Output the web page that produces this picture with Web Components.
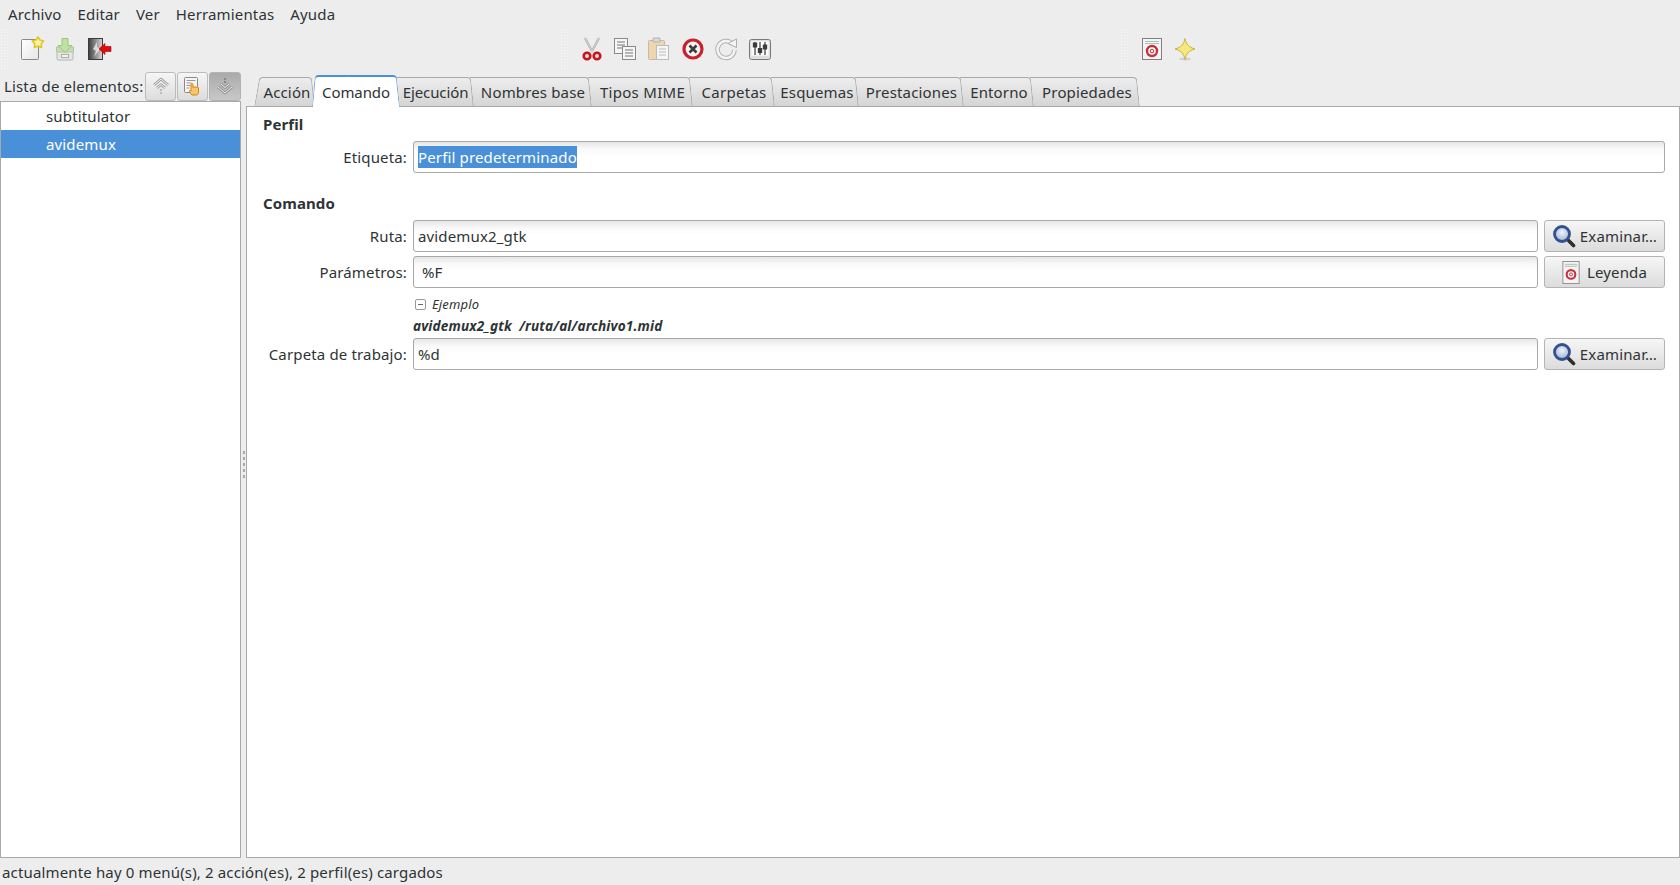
<!DOCTYPE html>
<html lang="es">
<head>
<meta charset="utf-8">
<title>Nautilus Actions</title>
<style>
  html, body { margin: 0; height: 100%; overflow: hidden; }
  body { background: #ededed; color: #2e3436; font: 15px "Noto Sans", sans-serif; letter-spacing: .15px; }
</style>
</head>
<body>
<app-window>
  <menu-bar>
    <span>Archivo</span><span>Editar</span><span>Ver</span><span>Herramientas</span><span>Ayuda</span>
  </menu-bar>
  <tool-bar>
    <tool-group>
      <tool-icon name="new"></tool-icon><tool-icon name="save"></tool-icon><tool-icon name="quit"></tool-icon>
    </tool-group>
    <tool-group>
      <tool-icon name="cut"></tool-icon><tool-icon name="copy"></tool-icon><tool-icon name="paste"></tool-icon>
      <tool-icon name="stop"></tool-icon><tool-icon name="reload"></tool-icon><tool-icon name="prefs"></tool-icon>
    </tool-group>
    <tool-group>
      <tool-icon name="help"></tool-icon><tool-icon name="about"></tool-icon>
    </tool-group>
  </tool-bar>
  <main-pane>
    <item-list slot="side">
      <span slot="title">Lista de elementos:</span>
      <list-row>subtitulator</list-row>
      <list-row selected>avidemux</list-row>
    </item-list>
    <tab-book>
      <tab-label slot="tabs" first style="width:61px">Acción</tab-label>
      <tab-label slot="tabs" active style="width:82px;letter-spacing:-.1px">Comando</tab-label>
      <tab-label slot="tabs" style="width:77px;letter-spacing:-.1px">Ejecución</tab-label>
      <tab-label slot="tabs" style="width:118px">Nombres base</tab-label>
      <tab-label slot="tabs" style="width:101px;letter-spacing:.3px">Tipos MIME</tab-label>
      <tab-label slot="tabs" style="width:82px;letter-spacing:.3px">Carpetas</tab-label>
      <tab-label slot="tabs" style="width:84px">Esquemas</tab-label>
      <tab-label slot="tabs" style="width:105px">Prestaciones</tab-label>
      <tab-label slot="tabs" style="width:70px">Entorno</tab-label>
      <tab-label slot="tabs" style="width:106px">Propiedades</tab-label>

      <command-page></command-page>
    </tab-book>
  </main-pane>
  <status-bar>actualmente hay 0 menú(s), 2 acción(es), 2 perfil(es) cargados</status-bar>
</app-window>

<script>
const ICONS = {
  new: `<svg viewBox="0 0 26 26" width="26" height="26">
    <defs><linearGradient id="p" x1="0" y1="0" x2="1" y2="1"><stop offset="0" stop-color="#fff"/><stop offset="1" stop-color="#e6e6e6"/></linearGradient></defs>
    <rect x="2.5" y="3.500" width="17" height="20" fill="url(#p)" stroke="#8a8a8a" rx="1"/>
    <path d="M19 .8l2 3.300 3.700.8-2.500 2.800.4 3.800-3.600-1.500-3.600 1.500.4-3.800-2.500-2.800 3.700-.8z" fill="#fdf3a8" stroke="#dcc81e" stroke-width="1.500" stroke-linejoin="round"/>
  </svg>`,
  save: `<svg viewBox="0 0 26 26" width="26" height="26">
    <path d="M5 15h16v8a1 1 0 0 1-1 1H6a1 1 0 0 1-1-1z" fill="#e4e6e2" stroke="#b8bab6"/>
    <path d="M4.500 11h17v5h-17z" fill="#c9dcb8" stroke="#b4c6a6"/>
    <path d="M10 2.500h6v7h4l-7 7-7-7h4z" fill="#c0e0a4" stroke="#9cc67c"/>
    <rect x="9.500" y="18.500" width="7" height="3" fill="#f4f4f4" stroke="#adadad"/>
  </svg>`,
  quit: `<svg viewBox="0 0 26 26" width="26" height="26">
    <defs><linearGradient id="d" x1="0" x2="1"><stop offset="0" stop-color="#3f3f3f"/><stop offset="1" stop-color="#d8d8d8"/></linearGradient></defs>
    <rect x="2.500" y="2.500" width="14" height="21" fill="url(#d)" stroke="#3a3a3a"/>
    <path d="M11 6l-4 7 3 2-2 6 6-8-3-2z" fill="#f0f0f0" opacity=".75"/>
    <path d="M13 13l6-5.500v3h6v5h-6v3z" fill="#e00d0d" stroke="#a50000" stroke-width=".6"/>
  </svg>`,
  cut: `<svg viewBox="0 0 26 26" width="26" height="26">
    <path d="M6 2l7.500 14M20 2l-7.500 14" stroke="#a8a8a8" stroke-width="2.200" fill="none"/>
    <path d="M6 2l7.500 14M20 2l-7.500 14" stroke="#ededed" stroke-width=".7" fill="none"/>
    <circle cx="8" cy="20" r="3.300" fill="#f2d8d8" stroke="#c4161c" stroke-width="2.600"/>
    <circle cx="18" cy="20" r="3.300" fill="#f2d8d8" stroke="#c4161c" stroke-width="2.600"/>
  </svg>`,
  copy: `<svg viewBox="0 0 26 26" width="26" height="26">
    <rect x="2.500" y="2.500" width="13" height="15" fill="#f6f6f6" stroke="#8a8a8a"/>
    <path d="M5 6h8M5 9h8M5 12h8" stroke="#777" fill="none"/>
    <rect x="10.500" y="10.500" width="13" height="13" fill="#f6f6f6" stroke="#8a8a8a"/>
    <path d="M13 14h8M13 17h8M13 20h8" stroke="#777" fill="none"/>
  </svg>`,
  paste: `<svg viewBox="0 0 26 26" width="26" height="26">
    <rect x="2.500" y="4.500" width="16" height="19" rx="1" fill="#edd7b2" stroke="#cdb998"/>
    <rect x="7" y="2" width="7" height="4" rx="1" fill="#dadada" stroke="#b0b0b0"/>
    <rect x="10.500" y="9.500" width="12" height="14" fill="#f6f6f6" stroke="#bbb"/>
    <path d="M13 13h7M13 16h7M13 19h7" stroke="#bbb" fill="none"/>
  </svg>`,
  stop: `<svg viewBox="0 0 26 26" width="26" height="26">
    <circle cx="13" cy="13" r="9" fill="#f4f4f4" stroke="#c9202a" stroke-width="3.200"/>
    <path d="M9.500 9.500l7 7M16.500 9.500l-7 7" stroke="#3c3c3c" stroke-width="2.600"/>
  </svg>`,
  reload: `<svg viewBox="0 0 26 26" width="26" height="26">
    <path d="M19.500 8A8.500 8.500 0 1 0 21.500 14" fill="none" stroke="#adadad" stroke-width="4.400"/>
    <path d="M19.500 8A8.500 8.500 0 1 0 21.500 14" fill="none" stroke="#f4f4f4" stroke-width="2.600"/>
    <path d="M15 7.500L23.500 3V11.500z" fill="#f4f4f4" stroke="#adadad"/>
  </svg>`,
  prefs: `<svg viewBox="0 0 26 26" width="26" height="26">
    <rect x="2.500" y="3.500" width="21" height="20" rx="2" fill="#dedede" stroke="#7a7a7a"/>
    <rect x="4.500" y="5.500" width="17" height="14" fill="#fff"/>
    <path d="M8 6v13M13 6v13M18 6v13" stroke="#555" stroke-width="1.400"/>
    <rect x="5.800" y="6.500" width="4.400" height="5" fill="#3c3c3c"/>
    <rect x="10.800" y="12" width="4.400" height="5" fill="#3c3c3c"/>
    <rect x="15.800" y="8.500" width="4.400" height="5" fill="#3c3c3c"/>
  </svg>`,
  help: `<svg viewBox="0 0 26 26" width="26" height="26">
    <rect x="3.500" y="2.500" width="19" height="21" fill="#f4f4f4" stroke="#808080"/>
    <path d="M6 5.500h14M6 7.500h14" stroke="#a9c4ae" fill="none"/>
    <circle cx="13" cy="15" r="5" fill="#fff" stroke="#c9303a" stroke-width="2.400"/>
    <circle cx="13" cy="15" r="1.800" fill="#f4f4f4" stroke="#c9303a"/>
  </svg>`,
  about: `<svg viewBox="0 0 26 26" width="26" height="26">
    <ellipse cx="13" cy="23" rx="6" ry="1.500" fill="#000" opacity=".12"/>
    <path d="M13 2.500c1.300 6 3.500 8.600 10 10.500-6.500 1.900-8.700 4.500-10 10.500-1.300-6-3.500-8.600-10-10.500 6.500-1.900 8.700-4.500 10-10.500z" fill="#f6e77e" stroke="#c9b53a"/>
  </svg>`,
  up: `<svg viewBox="0 0 18 18" width="18" height="18" fill="none" stroke-linejoin="round">
    <path d="M2 8l7-6 7 6M5 11l4-3.500 4 3.500" stroke="#9e9e9e" stroke-width="2.600"/>
    <path d="M2 8l7-6 7 6M5 11l4-3.500 4 3.500" stroke="#f4f4f4" stroke-width="1"/>
    <circle cx="9" cy="13" r="1" fill="#aaa"/><circle cx="9" cy="16" r=".9" fill="#aaa"/>
  </svg>`,
  down: `<svg viewBox="0 0 18 18" width="18" height="18" fill="none" stroke-linejoin="round">
    <circle cx="9" cy="2" r=".9" fill="#777"/><circle cx="9" cy="5" r="1" fill="#777"/>
    <path d="M2 10l7 6 7-6M5 7l4 3.500 4-3.500" stroke="#8e8e8e" stroke-width="2.600"/>
    <path d="M2 10l7 6 7-6M5 7l4 3.500 4-3.500" stroke="#f6f6f6" stroke-width="1"/>
  </svg>`,
  pick: `<svg viewBox="0 0 20 20" width="20" height="20">
    <rect x="1.500" y="1.500" width="13" height="15" rx="1" fill="#f5f5f5" stroke="#888"/>
    <path d="M3.500 4.500h9M3.500 7h5M3.500 9.500h4M3.500 12h3" stroke="#999" fill="none"/>
    <path d="M9 19c-1.500-1.500-2.500-3-2.500-4s1-1 1.500 0V8.500c0-1.300 2-1.300 2 0v3c0-1 1.800-1 1.800 0 0-1 1.800-1 1.800 0 0-.8 1.900-.8 1.900.3V16c0 1.500-.8 2.500-1.700 3z" fill="#f7c66a" stroke="#d8860f"/>
  </svg>`,
  find: `<svg viewBox="0 0 24 24" width="24" height="24">
    <defs><radialGradient id="g" cx=".5" cy=".4"><stop offset="0" stop-color="#f0f4fa"/><stop offset="1" stop-color="#a6bcdb"/></radialGradient></defs>
    <path d="M15 15l6.500 6.500" stroke="#2e2e2e" stroke-width="3.600" stroke-linecap="round"/>
    <circle cx="10" cy="10" r="7.500" fill="url(#g)" stroke="#34508f" stroke-width="2.800"/>
  </svg>`,
  legend: `<svg viewBox="0 0 18 24" width="18" height="23">
    <rect x=".5" y=".5" width="17" height="23" fill="#f4f4f4" stroke="#8f8f8f"/>
    <path d="M2.500 3.500h13M2.500 5.500h13" stroke="#a9c4ae" fill="none"/>
    <circle cx="9" cy="14" r="4.500" fill="#fff" stroke="#c9303a" stroke-width="2.200"/>
    <circle cx="9" cy="14" r="1.600" fill="#f4f4f4" stroke="#c9303a"/>
  </svg>`,
};

// small helper, every element below is just markup + style
function define(tag, html, extra) {
  class El extends HTMLElement {
    constructor() {
      super();
      this.attachShadow({ mode: 'open' }).innerHTML = html;
    }
    connectedCallback() {
      if (extra) extra.call(this);
    }
  }
  customElements.define(tag, El);
}

define('app-window', `
  <style>
    :host { display: flex; flex-direction: column; height: 885px; }
  </style>
  <slot></slot>
`);

define('menu-bar', `
  <style>
    :host { display: flex; height: 28px; align-items: center; flex: none; }
    ::slotted(span) { padding: 0 8px; }
  </style>
  <slot></slot>
`);

define('tool-bar', `
  <style>
    :host { display: flex; height: 42px; padding-bottom: 1px; flex: none; }
  </style>
  <slot></slot>
`);

define('tool-group', `
  <style>
    :host { display: flex; width: 560px; align-items: center; }
    .grip {
      width: 9px; height: 42px; margin-right: 6px;
      background-image: radial-gradient(circle, #f9f9f9 0.7px, transparent 0.9px);
      background-size: 3px 3px;
    }
    :host(:last-child) { flex: 1; }
  </style>
  <div class="grip"></div>
  <slot></slot>
`);

define('tool-icon', `
  <style>
    :host { display: flex; width: 33.600px; height: 42px; align-items: center; justify-content: center; }
    svg { display: block; }
  </style>
  <span id="i"></span>
`, function () {
  const i = this.shadowRoot.getElementById('i');
  i.innerHTML = ICONS[this.getAttribute('name')];
});

define('main-pane', `
  <style>
    :host { display: flex; flex: 1; min-height: 0; }
    .side { display: flex; width: 241px; flex: none; }
    .grip {
      width: 5px; flex: none; display: flex; flex-direction: column;
      align-items: center; justify-content: center; gap: 3px;
    }
    .grip i { width: 2px; height: 3px; background: #a8a8a8; }
  </style>
  <div class="side"><slot name="side"></slot></div>
  <div class="grip"><i></i><i></i><i></i><i></i><i></i></div>
  <slot></slot>
`);

define('item-list', `
  <style>
    :host { display: flex; flex-direction: column; flex: 1; min-width: 0; }
    .head { display: flex; align-items: center; height: 30px; flex: none; padding-left: 4px; }
    .title { flex: 1; white-space: nowrap; }
    .btns { display: flex; gap: 1px; }
    .list { flex: 1; background: #fff; border: 1px solid #a9a9a9; }
  </style>
  <div class="head">
    <div class="title"><slot name="title"></slot></div>
    <div class="btns">
      <mini-button icon="up"></mini-button>
      <mini-button icon="pick"></mini-button>
      <mini-button icon="down" pressed></mini-button>
    </div>
  </div>
  <div class="list"><slot></slot></div>
`);

define('mini-button', `
  <style>
    :host {
      display: flex; width: 29px; height: 27px;
      align-items: center; justify-content: center;
      border: 1px solid #bcbcbc; border-radius: 3px;
      background: linear-gradient(#f6f6f6, #dcdcdc);
    }
    :host([pressed]) { width: 30px; background: linear-gradient(#aaa, #c8c8c8); border-color: #b4b4b4; }
    span svg { display: block; }
  </style>
  <span id="i"></span>
`, function () {
  this.shadowRoot.getElementById('i').innerHTML = ICONS[this.getAttribute('icon')];
});

define('list-row', `
  <style>
    :host { display: flex; align-items: center; height: 28px; padding-left: 45px; }
    :host([selected]) { background: #4a90d9; color: #fff; }
  </style>
  <slot></slot>
`);

define('tab-book', `
  <style>
    :host { display: flex; flex-direction: column; flex: 1; min-width: 0; }
    .tabs { display: flex; height: 31px; padding: 5px 0 0 8px; flex: none; position: relative; z-index: 1; margin-bottom: -1px; }
    .page { flex: 1; background: #fff; border: 1px solid #a9a9a9; }
  </style>
  <div class="tabs"><slot name="tabs"></slot></div>
  <div class="page"><slot></slot></div>
`);

define('tab-label', `
  <style>
    :host {
      display: block; position: relative; height: 30px; margin-top: 1px; box-sizing: border-box;
      line-height: 31px; text-align: center; color: #2e3436; white-space: nowrap;
      flex: none;
    }
    .l, .r {
      position: absolute; top: 0; bottom: 0; box-sizing: border-box;
      background: linear-gradient(#ededed, #d4d4d4);
      border-top: 1px solid #a9a9a9;
    }
    .l { left: -4px; width: 60%; z-index: -2; }
    .r { right: 0; width: 60%; z-index: -1; border-right: 1px solid #a9a9a9; border-top-right-radius: 4px; transform: skewX(6deg); transform-origin: bottom right; }
    :host([first]) .l { left: 0; border-left: 1px solid #a9a9a9; border-top-left-radius: 4px; transform: skewX(-10deg); transform-origin: bottom left; }
    :host([first]) { padding-left: 5px; }
    .b { position: absolute; left: -4px; right: 0; bottom: 0; height: 1px; background: #a9a9a9; }
    :host([active]) { height: 32px; margin-top: -1px; line-height: 34px; z-index: 2; }
    :host([active]) .l, :host([active]) .r {
      background: #fff; border-top: 2px solid #4a90d9;
    }
    :host([active]) .l { left: -3px; border-left: 1px solid #7fa9d6; border-top-left-radius: 4px; transform: skewX(-5deg); transform-origin: bottom left; z-index: -1; }
    :host([active]) .r { right: -3px; border-right-color: #7fa9d6; }
    :host([active]) .b { display: none; }
  </style>
  <div class="l"></div><div class="r"></div><div class="b"></div>
  <slot></slot>
`);

define('text-entry', `
  <style>
    :host {
      display: flex; align-items: center; height: 32px; box-sizing: border-box;
      border: 1px solid #a8a8a8; border-radius: 3px; padding-left: 4px;
      background: linear-gradient(#e6e6e6, #f9f9f9 7px, #fff 14px);
      min-width: 0; white-space: pre;
    }
    ::slotted(mark) { display: inline-block; background: #4a90d9; color: #fff; line-height: 22px; }
  </style>
  <slot></slot>
`);

define('push-button', `
  <style>
    :host {
      display: flex; align-items: center; justify-content: center; gap: 4px;
      height: 32px; box-sizing: border-box;
      border: 1px solid #b4b4b4; border-radius: 3px;
      background: linear-gradient(#f6f6f6, #dcdcdc);
      white-space: nowrap;
    }
    #i svg { display: block; }
    :host([icon="legend"]) { gap: 7px; }
  </style>
  <span id="i"></span><slot></slot>
`, function () {
  this.shadowRoot.getElementById('i').innerHTML = ICONS[this.getAttribute('icon')];
});

define('command-page', `
  <style>
    :host { display: block; padding: 7px 14px 0 16px; }
    h3 { margin: 0; font-size: inherit; font-weight: bold; line-height: 20px; letter-spacing: .1px; }
    .grid {
      display: grid; grid-template-columns: 144px 1fr 121px; column-gap: 6px; row-gap: 4px;
      align-items: center;
    }
    label { text-align: right; white-space: nowrap; }
    .wide { grid-column: 2 / 4; }
    .sample { grid-column: 2 / 3; height: 42px; }
    .exp { display: flex; align-items: center; height: 24px; font-size: 13px; font-style: italic; padding-left: 2px; gap: 6px; }
    .box { width: 9px; height: 9px; border: 1px solid #999; border-radius: 2px; position: relative; }
    .box::after { content: ''; position: absolute; left: 2px; right: 2px; top: 4px; height: 1px; background: #666; }
    .cmd { margin-top: 2px; font-size: 13.600px; font-weight: bold; font-style: italic; line-height: 16px; white-space: pre; }
  </style>
  <h3 style="margin-bottom:7px">Perfil</h3>
  <div class="grid">
    <label>Etiqueta:</label>
    <text-entry class="wide"><mark>Perfil predeterminado</mark></text-entry>
  </div>
  <h3 style="margin-top:20px;margin-bottom:7px">Comando</h3>
  <div class="grid">
    <label>Ruta:</label>
    <text-entry>avidemux2_gtk</text-entry>
    <push-button icon="find">Examinar…</push-button>

    <label>Parámetros:</label>
    <text-entry style="padding-left:8px">%F</text-entry>
    <push-button icon="legend">Leyenda</push-button>

    <span></span>
    <div class="sample">
      <div class="exp"><span class="box"></span>Ejemplo</div>
      <div class="cmd">avidemux2_gtk  /ruta/al/archivo1.mid</div>
    </div>
    <span></span>

    <label>Carpeta de trabajo:</label>
    <text-entry>%d</text-entry>
    <push-button icon="find">Examinar…</push-button>
  </div>
`);

define('status-bar', `
  <style>
    :host { display: flex; align-items: center; height: 26px; padding-top: 1px; flex: none; padding-left: 2px; }
  </style>
  <slot></slot>
`);
</script>
</body>
</html>
